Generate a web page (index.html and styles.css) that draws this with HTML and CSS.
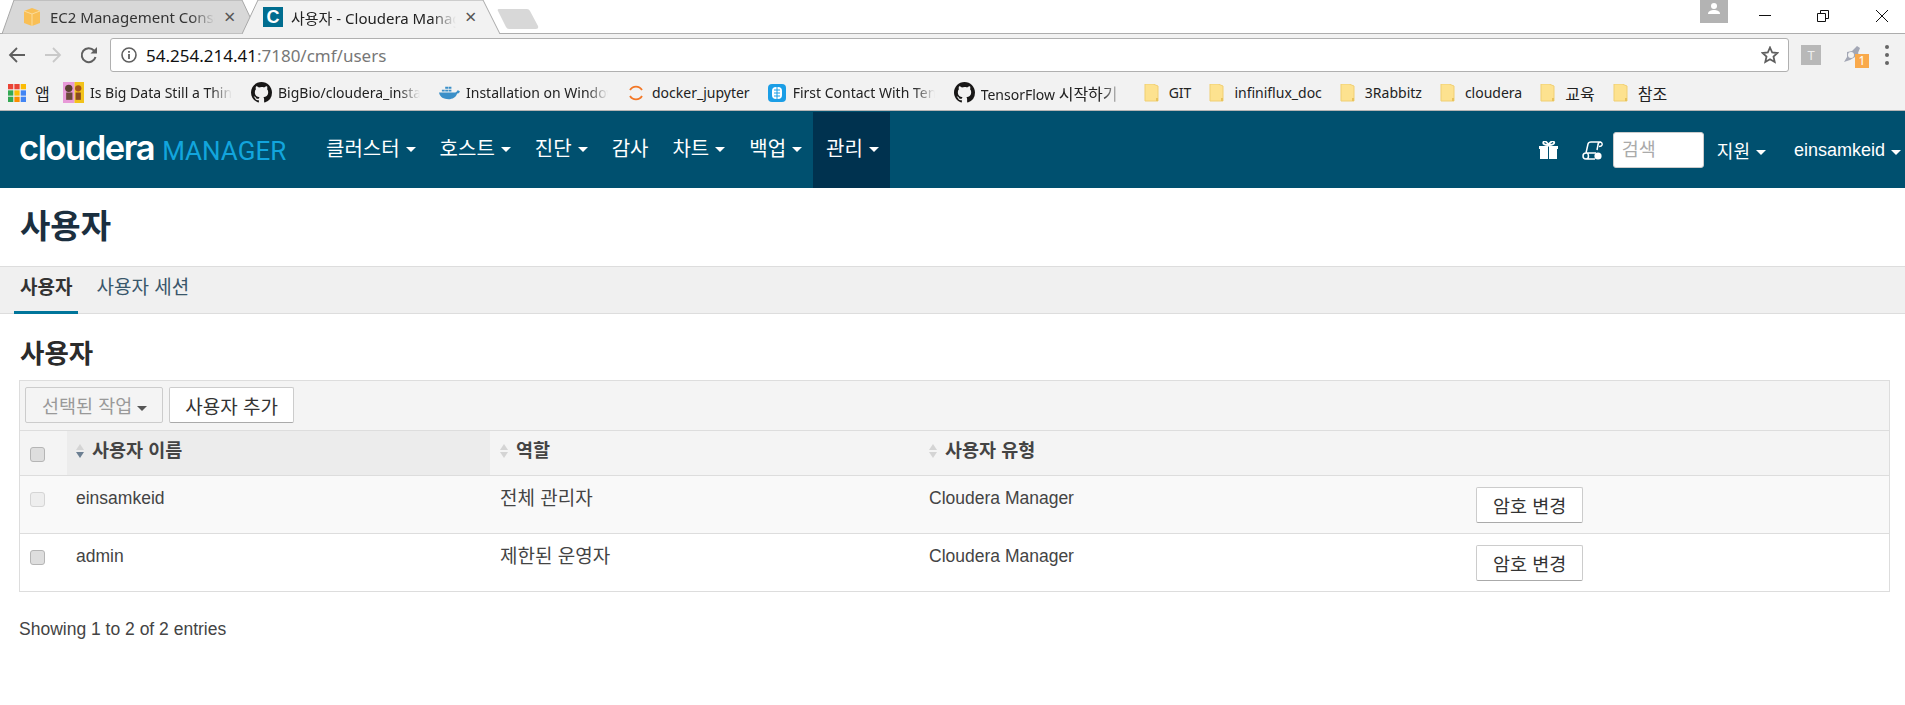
FILE: index.html
```html
<!DOCTYPE html>
<html lang="ko">
<head>
    <meta charset="UTF-8">
    <title>사용자 - Cloudera Manager</title>
    <link rel="stylesheet" href="styles.css">
</head>
<body>
    <div class="tabstrip">
        <div class="tab tab-inactive">
            <svg class="tab-shape" viewBox="0 0 256 34" preserveAspectRatio="none"><path d="M0 34L12 0H240L256 34Z" fill="#d8d8d8" stroke="#a8a8a8"/></svg>
            <svg class="favicon" viewBox="0 0 18 18"><path d="M9 0l8 3v12l-8 3-8-3V3z" fill="#f9bf55"/><path d="M9 6v12M1 3l8 3 8-3" stroke="#fbdc9c" fill="none"/></svg>
            <span class="tab-title">EC2 Management Console</span>
            <span class="tab-close">×</span>
        </div>
        <div class="tab tab-active">
            <svg class="tab-shape" viewBox="0 0 258 34" preserveAspectRatio="none"><path d="M0 34L16 0H241L258 34Z" fill="#f2f2f2"/><path d="M0 34L16 0H241L258 34" fill="none" stroke="#a8a8a8"/></svg>
            <span class="favicon-c">C</span>
            <span class="tab-title">사용자 - Cloudera Manager</span>
            <span class="tab-close">×</span>
        </div>
        <svg class="newtab" viewBox="0 0 42 22"><path d="M2 1H30Q32 1 33 3L41 18Q42 21 39 21H12Q10 21 9 19L1 3Q0 1 2 1Z" fill="#d8d8d8"/></svg>
        <div class="window-btns">
            <span class="profile"><svg width="14" height="14" viewBox="0 0 14 14"><circle cx="7" cy="4" r="3" fill="#fff"/><path d="M1 12c0-3 3-4 6-4s6 1 6 4z" fill="#fff"/></svg></span>
            <svg class="win-btn" viewBox="0 0 12 12"><path d="M0 5.500H12" stroke="#111"/></svg>
            <svg class="win-btn" viewBox="0 0 12 12"><path d="M.5 3.500H8.500V11.500H.5ZM3.500 3V.5H11.500V8.500H9" fill="none" stroke="#111"/></svg>
            <svg class="win-btn" viewBox="0 0 12 12"><path d="M0 0L12 12M12 0L0 12" stroke="#111"/></svg>
        </div>
    </div>

    <div class="toolbar">
        <svg class="tool-icon" viewBox="0 0 18 18"><path d="M17 9H2M9 2L2 9l7 7" fill="none" stroke="#5f5f5f" stroke-width="1.8"/></svg>
        <svg class="tool-icon" viewBox="0 0 18 18"><path d="M1 9H16M9 2l7 7-7 7" fill="none" stroke="#c9c9c9" stroke-width="1.8"/></svg>
        <svg class="tool-icon" viewBox="0 0 18 18"><path d="M15.5 11a7 7 0 1 1-1.5-6.5" fill="none" stroke="#5f5f5f" stroke-width="2"/><path d="M17 1v6.5h-6.5z" fill="#5f5f5f"/></svg>
        <div class="omnibox">
            <svg class="info-icon" viewBox="0 0 16 16"><circle cx="8" cy="8" r="7" fill="none" stroke="#5f5f5f" stroke-width="1.6"/><path d="M8 7v5M8 4v1.8" stroke="#5f5f5f" stroke-width="1.8"/></svg>
            <span class="url"><span class="url-host">54.254.214.41</span>:7180/cmf/users</span>
            <svg class="star" viewBox="0 0 18 18"><path d="M9 1.500l2.200 5 5.300.5-4 3.600 1.200 5.400L9 13.200 4.300 16l1.200-5.400-4-3.600 5.300-.5z" fill="none" stroke="#5f5f5f" stroke-width="1.8"/></svg>
        </div>
        <span class="ext-t">T</span>
        <span class="ext-alpha">
            <svg width="22" height="20" viewBox="0 0 22 20"><path d="M3 17l3-5V7l5-1 5-5 3 2-2 5 2 4-5 0-5 3z" fill="#a3a7b5"/><circle cx="10" cy="10" r="3" fill="#f2f2f2"/></svg>
            <span class="ext-badge">1</span>
        </span>
        <span class="menu-dots"><i></i><i></i><i></i></span>
    </div>

    <div class="bookmarks">
        <div class="bm bm-apps">
            <svg class="bm-icon" viewBox="0 0 17 17">
                <rect width="5" height="5" fill="#ea4335"/><rect x="6" width="5" height="5" fill="#ea4335"/><rect x="12" width="5" height="5" fill="#fbbc05"/>
                <rect y="6" width="5" height="5" fill="#34a853"/><rect x="6" y="6" width="5" height="5" fill="#fbbc05"/><rect x="12" y="6" width="5" height="5" fill="#4285f4"/>
                <rect y="12" width="5" height="5" fill="#34a853"/><rect x="6" y="12" width="5" height="5" fill="#fb8c00"/><rect x="12" y="12" width="5" height="5" fill="#4285f4"/>
            </svg>
            <span class="bm-ko">앱</span>
        </div>
        <div class="bm bm-cut">
            <svg class="bm-icon wide" viewBox="0 0 20 20"><rect width="11" height="20" fill="#e89ad8"/><rect x="11" width="9" height="20" fill="#f2c21a"/><circle cx="5.500" cy="6" r="3.500" fill="#5a4030"/><circle cx="14.500" cy="6" r="3" fill="#a5541c"/><rect x="3" y="10" width="6" height="7" fill="#6b4a3a"/><rect x="12" y="10" width="5" height="7" fill="#8a4a20"/></svg>
            <span class="bm-text">Is Big Data Still a Thing?</span>
        </div>
        <div class="bm bm-cut">
            <svg class="bm-icon wide" viewBox="0 0 16 16"><path fill="#181717" d="M8 0C3.580 0 0 3.580 0 8c0 3.540 2.290 6.530 5.470 7.590.4.070.55-.17.55-.38v-1.340c-2.230.48-2.700-1.070-2.700-1.070-.36-.92-.89-1.170-.89-1.170-.73-.5.050-.49.050-.49.800.06 1.230.83 1.230.83.710 1.220 1.870.87 2.330.66.070-.52.280-.87.510-1.070-1.780-.2-3.640-.89-3.640-3.950 0-.87.310-1.590.820-2.150-.08-.2-.36-1.020.080-2.120 0 0 .67-.21 2.200.82A7.600 7.600 0 0 1 8 3.870c.68 0 1.360.09 2 .27 1.530-1.040 2.200-.82 2.200-.82.44 1.100.16 1.920.08 2.120.51.560.82 1.270.82 2.150 0 3.070-1.870 3.750-3.650 3.950.29.250.54.730.54 1.480v2.190c0 .21.150.46.550.38A8 8 0 0 0 16 8c0-4.420-3.580-8-8-8z"/></svg>
            <span class="bm-text">BigBio/cloudera_installation</span>
        </div>
        <div class="bm bm-cut">
            <svg class="bm-icon wide" viewBox="0 0 22 16"><path d="M0 8h17c1 0 2-1 2-2 1 0 2 0 3 1-1 2-2 2-3 2-1 4-5 6-9 6-5 0-9-2-10-7z" fill="#3a8fc8"/><path d="M3 5h3v2H3zM6.500 5h3v2h-3zM10 5h3v2h-3zM6.500 2h3v2h-3zM10 2h3v2h-3z" fill="#3a8fc8"/></svg>
            <span class="bm-text">Installation on Windows</span>
        </div>
        <div class="bm">
            <svg class="bm-icon" viewBox="0 0 18 18"><path d="M3 6a7 7 0 0 1 12 0M3 12a7 7 0 0 0 12 0" fill="none" stroke="#f37726" stroke-width="1.800"/></svg>
            <span class="bm-text">docker_jupyter</span>
        </div>
        <div class="bm bm-cut bm-short">
            <svg class="bm-icon" viewBox="0 0 18 18"><rect width="18" height="18" rx="4" fill="#1b9ee6"/><rect x="4" y="3" width="10" height="12" rx="4" fill="#fff"/><path d="M6 6h6M6 9h6M6 12h6M9 3v12" stroke="#1b9ee6"/></svg>
            <span class="bm-text">First Contact With TensorFlow</span>
        </div>
        <div class="bm bm-cut bm-long">
            <svg class="bm-icon wide" viewBox="0 0 16 16"><path fill="#181717" d="M8 0C3.580 0 0 3.580 0 8c0 3.540 2.290 6.530 5.470 7.590.4.070.55-.17.55-.38v-1.340c-2.230.48-2.700-1.070-2.700-1.070-.36-.92-.89-1.170-.89-1.170-.73-.5.050-.49.050-.49.800.06 1.230.83 1.230.83.710 1.220 1.870.87 2.330.66.070-.52.280-.87.510-1.070-1.780-.2-3.640-.89-3.640-3.950 0-.87.310-1.590.820-2.150-.08-.2-.36-1.020.080-2.120 0 0 .67-.21 2.200.82A7.600 7.600 0 0 1 8 3.870c.68 0 1.360.09 2 .27 1.530-1.040 2.200-.82 2.200-.82.44 1.100.16 1.920.08 2.120.51.560.82 1.270.82 2.150 0 3.070-1.870 3.750-3.650 3.950.29.250.54.730.54 1.480v2.190c0 .21.150.46.550.38A8 8 0 0 0 16 8c0-4.420-3.580-8-8-8z"/></svg>
            <span class="bm-text">TensorFlow <span class="bm-ko">시작하기</span></span>
        </div>
        <div class="bm bm-folder"><svg class="folder" viewBox="0 0 15 18"><path d="M1 0H9L14 2V17H1Z" fill="#fde28f" stroke="#f0cf72"/><path d="M12 14h2v3h-2z" fill="#e8c35c"/></svg><span>GIT</span></div>
        <div class="bm bm-folder"><svg class="folder" viewBox="0 0 15 18"><path d="M1 0H9L14 2V17H1Z" fill="#fde28f" stroke="#f0cf72"/><path d="M12 14h2v3h-2z" fill="#e8c35c"/></svg><span>infiniflux_doc</span></div>
        <div class="bm bm-folder"><svg class="folder" viewBox="0 0 15 18"><path d="M1 0H9L14 2V17H1Z" fill="#fde28f" stroke="#f0cf72"/><path d="M12 14h2v3h-2z" fill="#e8c35c"/></svg><span>3Rabbitz</span></div>
        <div class="bm bm-folder"><svg class="folder" viewBox="0 0 15 18"><path d="M1 0H9L14 2V17H1Z" fill="#fde28f" stroke="#f0cf72"/><path d="M12 14h2v3h-2z" fill="#e8c35c"/></svg><span>cloudera</span></div>
        <div class="bm bm-folder"><svg class="folder" viewBox="0 0 15 18"><path d="M1 0H9L14 2V17H1Z" fill="#fde28f" stroke="#f0cf72"/><path d="M12 14h2v3h-2z" fill="#e8c35c"/></svg><span class="bm-ko">교육</span></div>
        <div class="bm bm-folder"><svg class="folder" viewBox="0 0 15 18"><path d="M1 0H9L14 2V17H1Z" fill="#fde28f" stroke="#f0cf72"/><path d="M12 14h2v3h-2z" fill="#e8c35c"/></svg><span class="bm-ko">참조</span></div>
    </div>

    <nav class="navbar">
        <a class="brand"><span class="brand-name">cloudera</span><span class="brand-sub">MANAGER</span></a>
        <ul class="nav-menu">
            <li>클러스터<i class="caret"></i></li>
            <li>호스트<i class="caret"></i></li>
            <li>진단<i class="caret"></i></li>
            <li>감사</li>
            <li>차트<i class="caret"></i></li>
            <li>백업<i class="caret"></i></li>
            <li class="active">관리<i class="caret"></i></li>
        </ul>
        <div class="nav-right">
            <svg class="nav-gift" viewBox="0 0 19 18"><path d="M0 5H19V8H18V18H1V8H0Z" fill="#fff"/><path d="M9.500 5V18" stroke="#00506f"/><path d="M9 4C6 4 3.500 3 4.500 1S8 1 9.500 4C11 1 14 -1 15 1S13 4 10 4" fill="none" stroke="#fff" stroke-width="1.800"/></svg>
            <svg class="nav-scroll" viewBox="0 0 21 19"><path d="M4 12L6 3Q6.500 1 9 1H19M19 1Q16 1 16 4L15 9M19 1Q20.500 2 20 4Q19.500 5.500 17 5.500M4 12H14M4 12Q1 12 1 15Q1 18 4 18H13M4 18Q6.500 18 6.500 15Q6.500 13 5 12" fill="none" stroke="#fff" stroke-width="1.500"/><circle cx="16" cy="15" r="3.600" fill="#fff"/></svg>
            <input class="nav-search" type="text" placeholder="검색">
            <span class="nav-link nav-help">지원<i class="caret"></i></span>
            <span class="nav-link nav-user">einsamkeid<i class="caret"></i></span>
        </div>
    </nav>

    <h1 class="page-title">사용자</h1>

    <div class="subnav">
        <a class="subnav-item selected">사용자</a>
        <a class="subnav-item">사용자 세션</a>
    </div>

    <main class="content">
        <h2>사용자</h2>
        <div class="panel">
            <div class="panel-tools">
                <button class="btn btn-disabled" type="button">선택된 작업<i class="caret caret-dark"></i></button>
                <button class="btn" type="button">사용자 추가</button>
            </div>
            <table class="users">
                <thead>
                    <tr>
                        <th class="col-check"><span class="check"></span></th>
                        <th class="col-name sorted"><i class="sort sort-down"></i>사용자 이름</th>
                        <th class="col-role"><i class="sort"></i>역할</th>
                        <th class="col-type"><i class="sort"></i>사용자 유형</th>
                        <th></th>
                    </tr>
                </thead>
                <tbody>
                    <tr class="odd">
                        <td><span class="check check-off"></span></td>
                        <td class="name">einsamkeid</td>
                        <td class="role">전체 관리자</td>
                        <td class="name">Cloudera Manager</td>
                        <td><button class="btn btn-row" type="button">암호 변경</button></td>
                    </tr>
                    <tr>
                        <td><span class="check"></span></td>
                        <td class="name">admin</td>
                        <td class="role">제한된 운영자</td>
                        <td class="name">Cloudera Manager</td>
                        <td><button class="btn btn-row" type="button">암호 변경</button></td>
                    </tr>
                </tbody>
            </table>
        </div>
        <p class="entries">Showing 1 to 2 of 2 entries</p>
    </main>
</body>
</html>
```

FILE: styles.css
```css
html, body {
    margin: 0;
    height: 100%;
    overflow: hidden;
}
body {
    font-family: "Liberation Sans", "Noto Sans CJK KR", sans-serif;
    font-size: 17.5px;
    color: #333;
    background-color: #fff;
}

/* browser chrome */
.tabstrip {
    display: flex;
    height: 34px;
    padding-left: 2px;
    position: relative;
    font-family: "Noto Sans", "Noto Sans CJK KR", sans-serif;
    font-size: 15px;
    color: #333;
    box-shadow: inset 0 -1px 0 #adadad;
}
.tab {
    position: relative;
    display: flex;
    align-items: center;
    height: 34px;
    padding-left: 21px;
    box-sizing: border-box;
}
.tab-inactive {
    width: 256px;
    margin-right: -16px;
}
.tab-active {
    width: 258px;
    color: #222;
}
.tab-shape {
    position: absolute;
    left: 0;
    top: 0;
    width: 100%;
    height: 100%;
}
.favicon {
    position: relative;
    width: 18px;
    height: 18px;
    margin-right: 9px;
    flex: none;
}
.favicon-c {
    position: relative;
    width: 20px;
    height: 20px;
    margin-right: 8px;
    flex: none;
    background-color: #006d8f;
    color: #fff;
    font: bold 18px/20px "Liberation Sans", sans-serif;
    text-align: center;
}
.tab-title {
    position: relative;
    width: 165px;
    white-space: nowrap;
    overflow: hidden;
    -webkit-mask-image: linear-gradient(to right, #000 85%, transparent);
    mask-image: linear-gradient(to right, #000 85%, transparent);
}
.tab-close {
    position: relative;
    margin-left: 9px;
    font-size: 20px;
    line-height: 20px;
    color: #555;
}
.newtab {
    width: 42px;
    height: 22px;
    margin: 8px 0 0 -3px;
    flex: none;
}
.window-btns {
    margin-left: auto;
    display: flex;
    align-self: flex-start;
}
.profile {
    width: 28px;
    height: 23px;
    margin-right: 31px;
    background-color: #b3b3b3;
    display: flex;
    align-items: flex-start;
    justify-content: center;
    padding-top: 2px;
    box-sizing: border-box;
}
.win-btn {
    width: 12px;
    height: 12px;
    margin: 10px 46px 0 0;
}
.win-btn:last-child {
    margin-left: 1px;
    margin-right: 17px;
}

.toolbar {
    display: flex;
    align-items: center;
    height: 41px;
    padding: 0 0 0 8px;
    background-color: #f2f2f2;
    font-family: "Noto Sans", sans-serif;
    box-sizing: border-box;
}
.tool-icon {
    width: 18px;
    height: 18px;
    margin-right: 18px;
    flex: none;
}
.omnibox {
    display: flex;
    align-items: center;
    width: 1679px;
    height: 34px;
    margin-left: -6px;
    margin-top: 1px;
    background-color: #fff;
    border: 1px solid #b0b0b0;
    border-radius: 3px;
    box-sizing: border-box;
    flex: none;
}
.info-icon {
    width: 16px;
    height: 16px;
    margin: 0 9px 0 10px;
}
.url {
    font-size: 17px;
    color: #777;
}
.url-host {
    color: #111;
}
.star {
    width: 18px;
    height: 18px;
    margin: 0 9px 0 auto;
}
.ext-t {
    width: 20px;
    height: 20px;
    margin-left: 12px;
    background-color: #b8b8b8;
    color: #eee;
    font-size: 13px;
    line-height: 20px;
    text-align: center;
}
.ext-alpha {
    position: relative;
    display: flex;
    margin-left: 20px;
}
.ext-badge {
    position: absolute;
    left: 14px;
    top: 9px;
    width: 14px;
    height: 14px;
    background-color: #f9a94b;
    color: #fff;
    font-size: 12px;
    line-height: 14px;
    text-align: center;
}
.menu-dots {
    display: flex;
    flex-direction: column;
    gap: 4px;
    margin-left: 22px;
}
.menu-dots i {
    width: 4px;
    height: 4px;
    border-radius: 50%;
    background-color: #666;
}

.bookmarks {
    display: flex;
    align-items: center;
    height: 36px;
    padding-left: 8px;
    background-color: #f2f2f2;
    border-bottom: 1px solid #b5b5b5;
    box-sizing: border-box;
    font-family: "Noto Sans", "Noto Sans CJK KR", sans-serif;
    font-size: 14px;
    color: #222;
    white-space: nowrap;
}
.bm {
    display: flex;
    align-items: center;
    padding-right: 18px;
    flex: none;
}
.bm-ko {
    font-size: 16px;
}
.bm-icon {
    width: 18px;
    height: 18px;
    margin-right: 7px;
    flex: none;
}
.bm-icon.wide {
    width: 21px;
    height: 21px;
    margin-right: 6px;
}
.bm-apps {
    width: 55px;
    box-sizing: border-box;
    padding-right: 0;
}
.bm-apps .bm-icon {
    margin-right: 9px;
}
.bm-cut {
    width: 188px;
    box-sizing: border-box;
}
.bm-short {
    width: 186px;
}
.bm-long {
    width: 190px;
}
.bm-cut .bm-text {
    width: 142px;
    overflow: hidden;
    -webkit-mask-image: linear-gradient(to right, #000 85%, transparent);
    mask-image: linear-gradient(to right, #000 85%, transparent);
}
.folder {
    width: 15px;
    height: 18px;
    margin-right: 10px;
    flex: none;
}

/* cloudera nav */
.navbar {
    display: flex;
    align-items: stretch;
    height: 77px;
    padding-top: 1px;
    box-sizing: border-box;
    background-color: #00506f;
    color: #fff;
}
.brand {
    display: flex;
    align-items: baseline;
    width: 313px;
    padding: 15px 0 0 19px;
    box-sizing: border-box;
    flex: none;
}
.brand-name {
    font-family: Inter, sans-serif;
    font-weight: 600;
    font-size: 34.5px;
    letter-spacing: -1.4px;
}
.brand-sub {
    margin-left: 8px;
    font-family: Roboto, sans-serif;
    font-size: 26px;
    color: #12a5dd;
}
.nav-menu {
    display: flex;
    list-style: none;
    margin: 0;
    padding: 0;
    font-size: 20px;
}
.nav-menu li {
    display: flex;
    align-items: center;
    padding: 0 11px 6px 13px;
}
.nav-menu li.active {
    background-color: #00324f;
}
.caret {
    display: inline-block;
    width: 0;
    height: 0;
    margin-left: 6px;
    margin-top: 4px;
    border-top: 5px solid #fff;
    border-left: 5px solid transparent;
    border-right: 5px solid transparent;
}
.nav-right {
    display: flex;
    align-items: center;
    margin-left: auto;
    padding-right: 4px;
}
.nav-gift {
    width: 19px;
    height: 18px;
    margin-right: 24px;
}
.nav-scroll {
    width: 21px;
    height: 19px;
    margin-right: 10px;
}
.nav-search {
    width: 91px;
    height: 36px;
    padding: 0 8px;
    border: 1px solid #ccc;
    border-radius: 3px;
    box-sizing: border-box;
    font-family: inherit;
    font-size: 18.5px;
}
.nav-search::placeholder {
    color: #aaa;
}
.nav-link {
    display: flex;
    align-items: center;
    font-size: 18px;
}
.nav-help {
    margin-left: 13px;
}
.nav-user {
    margin-left: 28px;
}

/* page */
.page-title {
    height: 78px;
    margin: 0;
    padding: 0 20px;
    box-sizing: border-box;
    font-size: 33px;
    font-weight: 700;
    line-height: 78px;
    color: #1b2f3f;
}
.subnav {
    display: flex;
    height: 48px;
    padding-left: 14px;
    background-color: #f0f0f0;
    border-top: 1px solid #ddd;
    border-bottom: 1px solid #ddd;
    box-sizing: border-box;
    font-size: 19px;
    line-height: 42px;
}
.subnav-item {
    padding: 0 6px;
    margin-right: 12px;
    color: #39566a;
}
.subnav-item.selected {
    color: #333;
    font-weight: 700;
    border-bottom: 3px solid #00759a;
    height: 44px;
}
.content {
    padding: 0 15px 0 19px;
}
.content h2 {
    height: 66px;
    margin: 0;
    padding-left: 1px;
    font-size: 26.5px;
    font-weight: 700;
    line-height: 80px;
    color: #2b2b2b;
}
.panel {
    border: 1px solid #ddd;
    border-bottom: none;
}
.panel-tools {
    display: flex;
    gap: 6px;
    height: 49px;
    padding: 6px 5px;
    background-color: #f4f4f4;
    box-sizing: border-box;
}
.btn {
    height: 36px;
    padding: 0 15px;
    background-color: #fff;
    border: 1px solid #ccc;
    border-bottom-color: #aaa;
    border-radius: 2px;
    font-family: inherit;
    font-size: 19px;
    color: #333;
}
.btn-disabled {
    background-color: #f4f4f4;
    border-color: #ccc;
    color: #999;
    padding: 0 15px 0 16px;
    font-size: 18.5px;
}
.btn-row {
    margin-left: -2px;
    padding: 0 16px;
    font-size: 18.5px;
}
.caret-dark {
    border-top-color: #555;
    border-width: 5px 5px 0;
    margin-top: 0;
    margin-left: 5px;
    vertical-align: middle;
}
.users {
    width: 100%;
    table-layout: fixed;
    border-collapse: collapse;
}
.users th {
    height: 45px;
    padding: 0 0 8px 10px;
    box-sizing: border-box;
    background-color: #f4f4f4;
    border-top: 1px solid #ddd;
    border-bottom: 1px solid #ddd;
    text-align: left;
    font-size: 18.5px;
    font-weight: 700;
    color: #444;
}
.users th.sorted {
    background-color: #ececec;
    padding-left: 9px;
}
.col-check {
    width: 47px;
}
.col-name {
    width: 423px;
}
.col-role {
    width: 429px;
}
.col-type {
    width: 549px;
}
.users td {
    height: 58px;
    padding: 11px 0 10px 10px;
    box-sizing: border-box;
    border-bottom: 1px solid #ddd;
    vertical-align: top;
    color: #444;
}
.users .odd td {
    background-color: #f9f9f9;
}
.users td.name {
    padding-top: 12px;
    line-height: 20px;
}
.users td:nth-child(2) {
    padding-left: 9px;
}
.users td.role {
    font-size: 19px;
    padding-top: 7px;
}
.users td:first-child,
.users th:first-child {
    padding-left: 10px;
}
.check {
    display: block;
    width: 15px;
    height: 15px;
    margin-top: 5px;
    background-color: #dedede;
    border: 1px solid #b5b5b5;
    border-radius: 3px;
    box-sizing: border-box;
}
.users th .check {
    margin-top: 10px;
}
.check-off {
    background-color: #eee;
    border-color: #d5d5d5;
}
.sort {
    position: relative;
    display: inline-block;
    width: 8px;
    height: 14px;
    margin-right: 8px;
    vertical-align: -1px;
}
.sort::before,
.sort::after {
    content: "";
    position: absolute;
    left: 0;
    border-left: 4px solid transparent;
    border-right: 4px solid transparent;
}
.sort::before {
    top: 0;
    border-bottom: 6px solid #d4d4d4;
}
.sort::after {
    bottom: 0;
    border-top: 6px solid #d4d4d4;
}
.sort-down::after {
    border-top-color: #6c7f92;
}
.entries {
    margin: 27px 0 0;
    color: #444;
}
```
